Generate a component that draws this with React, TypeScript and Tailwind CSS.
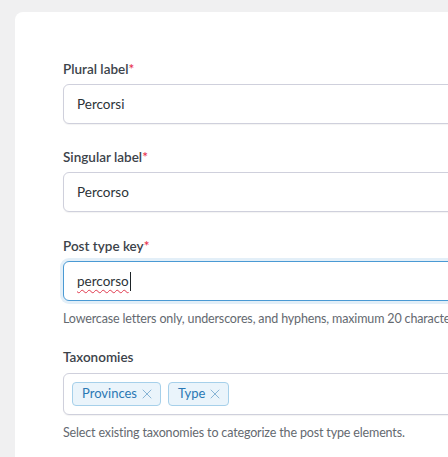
import { X } from "lucide-react";

function Label({ text, required }: { text: string; required?: boolean }) {
  return (
    <label className="block text-[13.5px] leading-5 font-semibold text-[#3c434a] mb-[5px]">
      {text}
      {required && <span className="text-[#e8344f]">*</span>}
    </label>
  );
}

function TextInput({ value, focused }: { value: string; focused?: boolean }) {
  return (
    <div
      className={
        focused
          ? "h-10 w-[420px] rounded-md border border-[#4a9ad4] bg-white px-[13px] flex items-center text-[13.5px] text-[#2c3338] ring-[3px] ring-[#e3eff8]"
          : "h-10 w-[420px] rounded-md border border-[#cfd0dc] bg-white px-[13px] flex items-center text-[13.5px] text-[#2c3338] shadow-[0_1px_1px_rgba(0,0,0,0.05)]"
      }
    >
      {focused ? (
        <span className="flex items-center">
          <span className="underline decoration-wavy decoration-[#e0394d] decoration-1 underline-offset-[3px]">{value}</span>
          <span className="ml-px h-[19px] w-px bg-[#1d2327]" />
        </span>
      ) : (
        value
      )}
    </div>
  );
}

function Chip({ text }: { text: string }) {
  return (
    <span className="flex h-[24px] items-center gap-[2px] rounded-[4px] border border-[#a6d0ea] bg-[#eaf4fb] pl-[9px] pr-[5px] text-[13px] text-[#2a78b4]">
      {text}
      <X size={16} strokeWidth={1.2} className="text-[#6ea4cc]" />
    </span>
  );
}

export default function App() {
  return (
    <main
      className="min-h-[457px] w-[448px] overflow-hidden bg-[#f0f0f1] pt-3 pl-[15px]"
      style={{ fontFamily: 'Lato, "Noto Sans", sans-serif' }}
    >
      <div className="h-[460px] w-[520px] rounded-lg bg-white pl-12 pt-[47px]">
        <Label text="Plural label" required />
        <TextInput value="Percorsi" />

        <div className="mt-[23px]">
          <Label text="Singular label" required />
          <TextInput value="Percorso" />
        </div>

        <div className="mt-6">
          <Label text="Post type key" required />
          <TextInput value="percorso" focused />
          <p className="mt-[9px] whitespace-nowrap text-[12.5px] tracking-[-0.15px] leading-[18px] text-[#646970]">
            Lowercase letters only, underscores, and hyphens, maximum 20 characters.
          </p>
        </div>

        <div className="mt-[19px]">
          <label className="block text-[13.5px] leading-5 font-semibold text-[#3c434a] mb-[6px]">Taxonomies</label>
          <div className="flex h-[42px] w-[420px] items-center gap-[7px] rounded-md border border-[#cfd0dc] bg-white px-[8px] shadow-[0_1px_1px_rgba(0,0,0,0.05)]">
            <Chip text="Provinces" />
            <Chip text="Type" />
          </div>
          <p className="mt-[9px] whitespace-nowrap text-[12.5px] tracking-[-0.15px] leading-[18px] text-[#646970]">
            Select existing taxonomies to categorize the post type elements.
          </p>
        </div>
      </div>
    </main>
  );
}
